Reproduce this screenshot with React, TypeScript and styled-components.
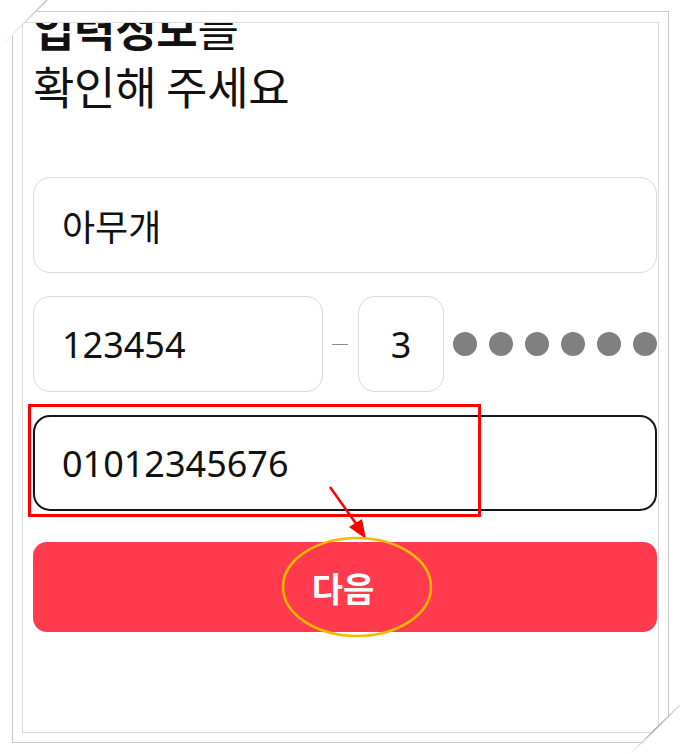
import React from "react";
import styled, { createGlobalStyle } from "styled-components";

const GlobalStyle = createGlobalStyle`
  html, body {
    margin: 0;
    padding: 0;
    background: #ffffff;
  }
  body {
    font-family: "Noto Sans", "Noto Sans CJK KR", sans-serif;
    color: #111111;
  }
`;

const Page = styled.div`
  position: relative;
  width: 680px;
  height: 754px;
  padding: 11px 11px 11px 12px;
  box-sizing: border-box;
  overflow: hidden;
`;

const OuterFrame = styled.div`
  height: 100%;
  box-sizing: border-box;
  border: 1px solid #c8c8c8;
  padding: 10px 9px 9px 9px;
`;

const InnerFrame = styled.div`
  height: 100%;
  box-sizing: border-box;
  border: 1px solid #dadada;
  overflow: hidden;
`;

const Content = styled.div`
  padding: 0 1px 0 10px;
  display: flex;
  flex-direction: column;
`;

const Title = styled.h1`
  margin: -24px 0 62px;
  font-family: "Noto Sans CJK KR", sans-serif;
  font-size: 45px;
  line-height: 58px;
  font-weight: 400;
  color: #111111;
  letter-spacing: -0.3px;

  b {
    font-weight: 700;
  }
`;

const Field = styled.div<{ $active?: boolean; $width?: string; $center?: boolean }>`
  box-sizing: border-box;
  height: 96px;
  width: ${(p) => p.$width ?? "100%"};
  flex: ${(p) => (p.$width ? "none" : "1 1 auto")};
  border: ${(p) => (p.$active ? "2px solid #161616" : "1px solid #d9d9d9")};
  border-radius: 17px;
  display: flex;
  align-items: center;
  justify-content: ${(p) => (p.$center ? "center" : "flex-start")};
  padding-left: ${(p) => (p.$center ? "0" : p.$active ? "27px" : "28px")};
  font-size: 36px;
  color: #111111;
  background: #ffffff;
`;

const Stack = styled.div`
  display: flex;
  flex-direction: column;
  gap: 23px;
`;

const IdRow = styled.div`
  display: flex;
  align-items: center;
`;

const Dash = styled.span`
  width: 16px;
  height: 1px;
  background: #8a8a8a;
  margin: 0 10px 0 9px;
`;

const Dots = styled.div`
  display: flex;
  gap: 12px;
  margin-left: 9px;
`;

const Dot = styled.span`
  width: 24px;
  height: 24px;
  border-radius: 50%;
  background: #808080;
`;

const NextButton = styled.button`
  margin-top: 31px;
  height: 90px;
  border: none;
  border-radius: 14px;
  background: #ff3b4d;
  color: #ffffff;
  font-family: "Noto Sans CJK KR", sans-serif;
  font-size: 34px;
  font-weight: 700;
  padding: 0 4px 0 0;
`;

const Annotations = styled.svg`
  position: absolute;
  left: 0;
  top: 0;
  pointer-events: none;
`;

export default function App() {
  return (
    <>
      <GlobalStyle />
      <Page>
        <OuterFrame>
          <InnerFrame>
            <Content>
              <Title>
                <b>입력정보</b>를
                <br />
                확인해 주세요
              </Title>
              <Stack>
                <Field>아무개</Field>
                <IdRow>
                  <Field $width="290px">123454</Field>
                  <Dash />
                  <Field $width="86px" $center>
                    3
                  </Field>
                  <Dots>
                    {Array.from({ length: 6 }).map((_, i) => (
                      <Dot key={i} />
                    ))}
                  </Dots>
                </IdRow>
                <Field $active>01012345676</Field>
              </Stack>
              <NextButton>다음</NextButton>
            </Content>
          </InnerFrame>
        </OuterFrame>
        <Annotations width="680" height="754" viewBox="0 0 680 754">
          <defs>
            <linearGradient id="curlA" x1="0" y1="1" x2="1" y2="0">
              <stop offset="0" stopColor="#ffffff" />
              <stop offset="1" stopColor="#bdbdbd" />
            </linearGradient>
            <linearGradient id="curlB" x1="0" y1="1" x2="1" y2="0">
              <stop offset="0" stopColor="#ffffff" />
              <stop offset="0.5" stopColor="#a8a8a8" />
              <stop offset="1" stopColor="#e0e0e0" />
            </linearGradient>
          </defs>
          <polygon points="0,0 47,0 0,47" fill="#ffffff" />
          <line x1="0" y1="47" x2="47" y2="0" stroke="url(#curlA)" strokeWidth="1.5" />
          <polygon points="680,754 632,754 680,706" fill="#ffffff" />
          <line x1="630" y1="754" x2="680" y2="705" stroke="url(#curlB)" strokeWidth="1.5" />
          <rect x="29.5" y="405.5" width="450" height="110" fill="none" stroke="#ff0000" strokeWidth="3" />
          <line x1="330" y1="487" x2="357" y2="525" stroke="#ff0000" strokeWidth="2.5" />
          <polygon points="366,539 349,527 362,519" fill="#ff0000" />
          <ellipse cx="357" cy="587" rx="74" ry="49" fill="none" stroke="#f7b900" strokeWidth="2.5" />
        </Annotations>
      </Page>
    </>
  );
}
